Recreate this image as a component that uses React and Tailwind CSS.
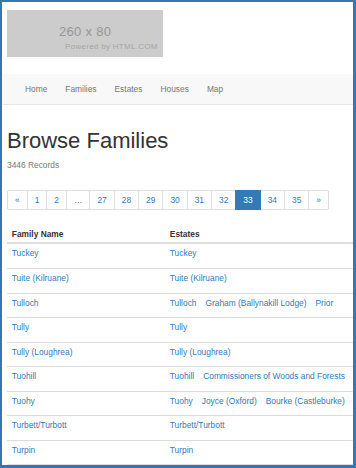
import React from "react";

const rows = [
  ["Tuckey", ["Tuckey"]],
  ["Tuite (Kilruane)", ["Tuite (Kilruane)"]],
  ["Tulloch", ["Tulloch", "Graham (Ballynakill Lodge)", "Prior"]],
  ["Tully", ["Tully"]],
  ["Tully (Loughrea)", ["Tully (Loughrea)"]],
  ["Tuohill", ["Tuohill", "Commissioners of Woods and Forests"]],
  ["Tuohy", ["Tuohy", "Joyce (Oxford)", "Bourke (Castleburke)"]],
  ["Turbett/Turbott", ["Turbett/Turbott"]],
  ["Turpin", ["Turpin"]],
];

const pages = ["«", "1", "2", "…", "27", "28", "29", "30", "31", "32", "33", "34", "35", "»"];

export default function App() {
  return (
    <div className="w-[356px] h-[468px] overflow-hidden border-t-2 border-l-2 border-r-[3px] border-b-[3px] border-[#3277b9] bg-white font-['Liberation_Sans',Arial,sans-serif]">
      {/* placeholder image */}
      <div className="ml-[5px] mt-[8px] w-[156px] h-[47px] bg-[#cccccc] flex flex-col">
        <div className="mt-[14px] ml-[52px] text-[13px] leading-[15px] text-[#969696] tracking-[0.3px]">260 x 80</div>
        <div className="mt-[3px] ml-[58px] text-[8px] leading-[10px] text-[#a6a6a6] tracking-[0.3px] whitespace-nowrap">Powered by HTML.COM</div>
      </div>

      {/* navbar */}
      <div className="mt-[17px] h-[31px] bg-[#f8f8f8] border-b border-[#e7e7e7] flex items-center pl-[14px]">
        {["Home", "Families", "Estates", "Houses", "Map"].map((l) => (
          <span key={l} className="px-[9px] text-[8.4px] leading-[12px] text-[#777777]">{l}</span>
        ))}
      </div>

      <h1 className="ml-[5px] mt-[24px] text-[22px] leading-[24px] text-[#333333] font-normal">Browse Families</h1>
      <div className="ml-[5px] mt-[6px] text-[8.4px] leading-[12px] text-[#777777]">3446 Records</div>

      {/* pagination */}
      <div className="ml-[5px] mt-[19px] flex">
        {pages.map((p, i) => {
          const active = p === "33";
          return (
            <span
              key={i}
              className={
                "px-[7px] py-[3px] text-[8.4px] leading-[12px] border " +
                (i > 0 ? "-ml-px " : "rounded-l-[2px] ") +
                (i === pages.length - 1 ? "rounded-r-[2px] " : "") +
                (active
                  ? "bg-[#337ab7] border-[#337ab7] text-white relative"
                  : "bg-white border-[#dddddd] text-[#337ab7]")
              }
            >
              {p}
            </span>
          );
        })}
      </div>

      {/* table */}
      <div className="ml-[5px] mt-[14px] text-[8.4px] leading-[12px]">
        <div className="flex h-[20px] border-b-2 border-[#dddddd] font-bold text-[#333333]">
          <div className="w-[158px] px-[4.8px] pt-[3.6px]">Family Name</div>
          <div className="flex-1 px-[4.8px] pt-[3.6px]">Estates</div>
        </div>
        {rows.map(([name, estates], i) => (
          <div
            key={name}
            className={"flex text-[#337ab7] " + (i === 0 ? "h-[24px]" : "h-[24.5px] border-t border-[#dddddd]")}
          >
            <div className="w-[158px] px-[4.8px] pt-[3px] whitespace-nowrap">{name}</div>
            <div className="flex-1 px-[4.8px] pt-[3px] flex gap-[9px] whitespace-nowrap">
              {estates.map((e) => (
                <span key={e}>{e}</span>
              ))}
            </div>
          </div>
        ))}
        <div className="border-t border-[#dddddd]" />
      </div>
    </div>
  );
}
